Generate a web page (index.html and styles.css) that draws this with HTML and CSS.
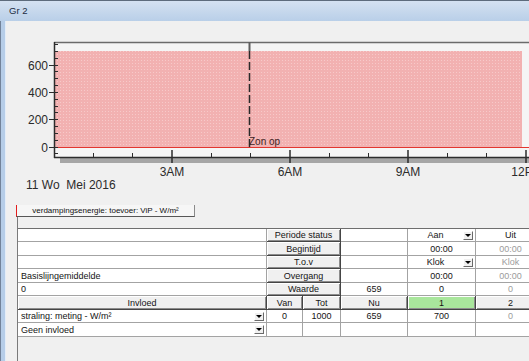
FILE: index.html
```html
<!DOCTYPE html>
<html lang="nl">
<head>
    <meta charset="UTF-8">
    <title>Gr 2</title>
    <link rel="stylesheet" href="styles.css">
</head>
<body>
    <div class="window">
        <div class="titlebar">Gr 2</div>
        <div class="frame">
            <div class="frame-edge"></div>
            <div class="client">
                <svg class="chart" width="523" height="175" viewBox="6 21 523 175">
                    <defs>
                        <pattern id="mesh" width="3" height="3" patternUnits="userSpaceOnUse">
                            <rect width="3" height="3" fill="#f2b1b1"/>
                            <rect width="1" height="1" fill="#f7c9c9"/>
                        </pattern>
                    </defs>
                    <rect x="54" y="42" width="475" height="115" fill="#f5f5f5"/>
                    <rect x="60" y="158" width="469" height="5" fill="#a6a6a6"/>
                    <rect x="55" y="51" width="467" height="96" fill="url(#mesh)"/>
                    <line x1="54" y1="147.5" x2="529" y2="147.5" stroke="#e2362f"/>
                    <line x1="54" y1="42.5" x2="529" y2="42.5" stroke="#6b6b6b" stroke-width="1.5"/>
                    <path d="M54.5 42V158M54 157.5H529" stroke="#2c2c2c" stroke-width="1.5" fill="none"/>
                    <!-- y ticks -->
                    <path d="M54 44.5h4M54 51.5h4M54 58.5h4M54 71.5h4M54 78.5h4M54 85.5h4M54 99.5h4M54 106.5h4M54 112.5h4M54 126.5h4M54 133.5h4M54 140.5h4M54 153.5h4" stroke="#2c2c2c" fill="none"/>
                    <path d="M49 65.5h9M49 92.5h9M49 119.5h9M49 147.5h9" stroke="#2c2c2c" fill="none"/>
                    <g class="axis-label" text-anchor="end">
                        <text x="48" y="69.5">600</text>
                        <text x="48" y="97">400</text>
                        <text x="48" y="124">200</text>
                        <text x="48" y="151.5">0</text>
                    </g>
                    <!-- x ticks -->
                    <path d="M93.5 153v4M132.5 153v4M211.5 153v4M250.5 153v4M329.5 153v4M368.5 153v4M447.5 153v4M486.5 153v4" stroke="#2c2c2c" fill="none"/>
                    <path d="M172 150v13M290 150v13M408 150v13M526 150v13" stroke="#2c2c2c" stroke-width="1.5" fill="none"/>
                    <g class="axis-label" text-anchor="middle">
                        <text x="172" y="175.5">3AM</text>
                        <text x="290" y="175.5">6AM</text>
                        <text x="408" y="175.5">9AM</text>
                        <text x="527" y="175.5">12PM</text>
                    </g>
                    <text class="axis-label" x="26" y="188.5">11 Wo&#160; Mei 2016</text>
                    <!-- sunrise marker -->
                    <line x1="249.5" y1="42" x2="249.5" y2="51" stroke="#5e5e5e" stroke-width="2"/>
                    <line x1="249.5" y1="51" x2="249.5" y2="147" stroke="#2a2a2a" stroke-width="1.5" stroke-dasharray="8 3"/>
                    <text class="marker-label" x="249" y="145">Zon op</text>
                </svg>

                <div class="tabs">
                    <div class="tab">verdampingsenergie: toevoer: ViP - W/m²</div>
                </div>

                <div class="page">
                    <div class="grid">
                        <div class="cell"></div>
                        <div class="cell btn span2">Periode status</div>
                        <div class="cell"></div>
                        <div class="cell combo"><span>Aan</span><i class="arrow"></i></div>
                        <div class="cell">Uit</div>

                        <div class="cell"></div>
                        <div class="cell btn span2">Begintijd</div>
                        <div class="cell"></div>
                        <div class="cell">00:00</div>
                        <div class="cell muted">00:00</div>

                        <div class="cell"></div>
                        <div class="cell btn span2">T.o.v</div>
                        <div class="cell"></div>
                        <div class="cell combo"><span>Klok</span><i class="arrow"></i></div>
                        <div class="cell muted">Klok</div>

                        <div class="cell left">Basislijngemiddelde</div>
                        <div class="cell btn span2">Overgang</div>
                        <div class="cell"></div>
                        <div class="cell">00:00</div>
                        <div class="cell muted">00:00</div>

                        <div class="cell left">0</div>
                        <div class="cell btn span2">Waarde</div>
                        <div class="cell">659</div>
                        <div class="cell">0</div>
                        <div class="cell muted">0</div>

                        <div class="cell btn">Invloed</div>
                        <div class="cell btn">Van</div>
                        <div class="cell btn">Tot</div>
                        <div class="cell btn">Nu</div>
                        <div class="cell btn green">1</div>
                        <div class="cell btn">2</div>

                        <div class="cell select"><span>straling: meting - W/m²</span><i class="arrow"></i></div>
                        <div class="cell">0</div>
                        <div class="cell">1000</div>
                        <div class="cell">659</div>
                        <div class="cell">700</div>
                        <div class="cell muted">0</div>

                        <div class="cell select"><span>Geen invloed</span><i class="arrow"></i></div>
                        <div class="cell"></div>
                        <div class="cell"></div>
                        <div class="cell"></div>
                        <div class="cell"></div>
                        <div class="cell"></div>
                    </div>
                </div>
            </div>
        </div>
    </div>
</body>
</html>
```

FILE: styles.css
```css
body {
    margin: 0;
    font-family: "Liberation Sans", Arial, sans-serif;
    background: #f0f0f0;
}
.window {
    width: 529px;
    height: 361px;
    overflow: hidden;
    display: flex;
    flex-direction: column;
    background: #f0f0f0;
}
.titlebar {
    height: 20px;
    border-top: 1px solid #5d6b7c;
    background: linear-gradient(#d4e1f1, #b9cfe8);
    padding-left: 9px;
    font-size: 9.5px;
    line-height: 20px;
    color: #1c2b43;
}
.frame {
    flex: 1;
    display: flex;
    min-height: 0;
}
.frame-edge {
    width: 4px;
    background: #b6cde8;
    border-left: 1px solid #73839a;
    border-right: 1px solid #e4edf8;
}
.client {
    flex: 1;
    min-width: 0;
    display: flex;
    flex-direction: column;
}
.chart {
    display: block;
}
.axis-label {
    font-family: "Liberation Sans", Arial, sans-serif;
    font-size: 12px;
    fill: #2b2b2b;
}
.marker-label {
    font-family: "Liberation Sans", Arial, sans-serif;
    font-size: 10px;
    fill: #3d1f1f;
}
.tabs {
    display: flex;
    margin: 9px 0 0 10px;
}
.tab {
    width: 179px;
    height: 12px;
    box-sizing: border-box;
    background: #f6f6f6;
    border-left: 1px solid #e21d1d;
    border-right: 1px solid #8a8a8a;
    border-bottom: 1px solid #575757;
    font-size: 8px;
    line-height: 11px;
    text-align: center;
    color: #111;
    white-space: nowrap;
}
.page {
    flex: 1;
    margin-left: 11px;
    border-left: 1px solid #7a7a7a;
    padding-top: 11px;
}
.grid {
    display: grid;
    grid-template-columns: 249px 36px 38px 67px 68px 70px;
    grid-template-rows: 13px 14px 13px 14px 13px 14px 13px 14px;
    border-top: 1px solid #6e6e6e;
    font-size: 9px;
}
.cell {
    box-sizing: border-box;
    background: #fff;
    border-right: 1px solid #a3a3a3;
    border-bottom: 1px solid #a3a3a3;
    display: flex;
    align-items: center;
    justify-content: center;
    color: #141414;
    white-space: nowrap;
    overflow: hidden;
}
.cell.left {
    justify-content: flex-start;
    padding-left: 3px;
}
.btn {
    background: #f0f0f0;
    border-right-color: #454545;
    border-bottom-color: #454545;
    box-shadow: inset 1px 1px #ffffff, inset -1px -1px #8c8c8c;
}
.span2 {
    grid-column: span 2;
}
.muted {
    color: #9c9c9c;
}
.green {
    background: #a9e69c;
}
.combo span {
    flex: 1;
    text-align: center;
}
.select {
    justify-content: space-between;
    padding-left: 3px;
}
.arrow {
    width: 10px;
    height: 9px;
    box-sizing: border-box;
    margin-right: 2px;
    background: #f0f0f0;
    border: 1px solid;
    border-color: #ffffff #6a6a6a #6a6a6a #ffffff;
    display: flex;
    align-items: center;
    justify-content: center;
}
.arrow::after {
    content: "";
    border-left: 3px solid transparent;
    border-right: 3px solid transparent;
    border-top: 3px solid #000;
}
```
